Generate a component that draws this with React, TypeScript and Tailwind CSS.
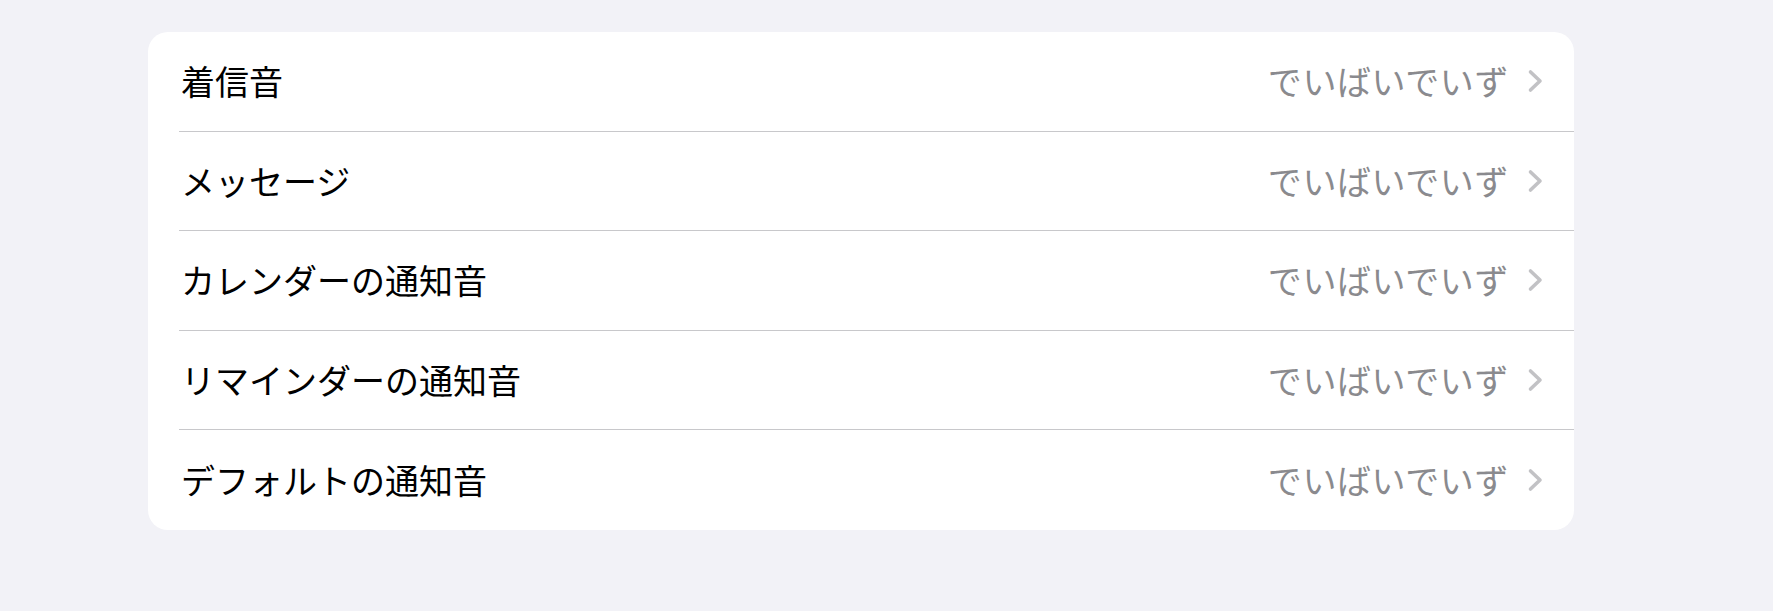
const rows = ['着信音', 'メッセージ', 'カレンダーの通知音', 'リマインダーの通知音', 'デフォルトの通知音'];

function Chevron() {
  return (
    <svg width="16" height="24" viewBox="0 0 16 24" fill="none" className="shrink-0">
      <path d="M3.5 3 L13 12 L3.5 21" stroke="#c2c2c5" strokeWidth="3.6" strokeLinecap="round" strokeLinejoin="round" />
    </svg>
  );
}

export default function App() {
  return (
    <div
      className="min-h-[611px] w-full bg-[#f2f2f7] pt-[32px] pl-[148px]"
      style={{ fontFamily: '"Noto Sans CJK JP", "Noto Sans", sans-serif' }}
    >
      <div className="w-[1426px] rounded-[20px] bg-white pl-[31px]">
        {rows.map((label, i) => (
          <div
            key={label}
            className={`flex h-[99.6px] items-center justify-between pr-[31px] ${
              i < rows.length - 1 ? 'border-b border-[#c8c8cb]' : ''
            }`}
          >
            <span className="pl-[2px] text-[34px] leading-none text-black">{label}</span>
            <div className="flex items-center gap-[18px]">
              <span className="text-[34px] leading-none tracking-[0.6px] text-[#8a8a8e]">でいばいでいず</span>
              <Chevron />
            </div>
          </div>
        ))}
      </div>
    </div>
  );
}
